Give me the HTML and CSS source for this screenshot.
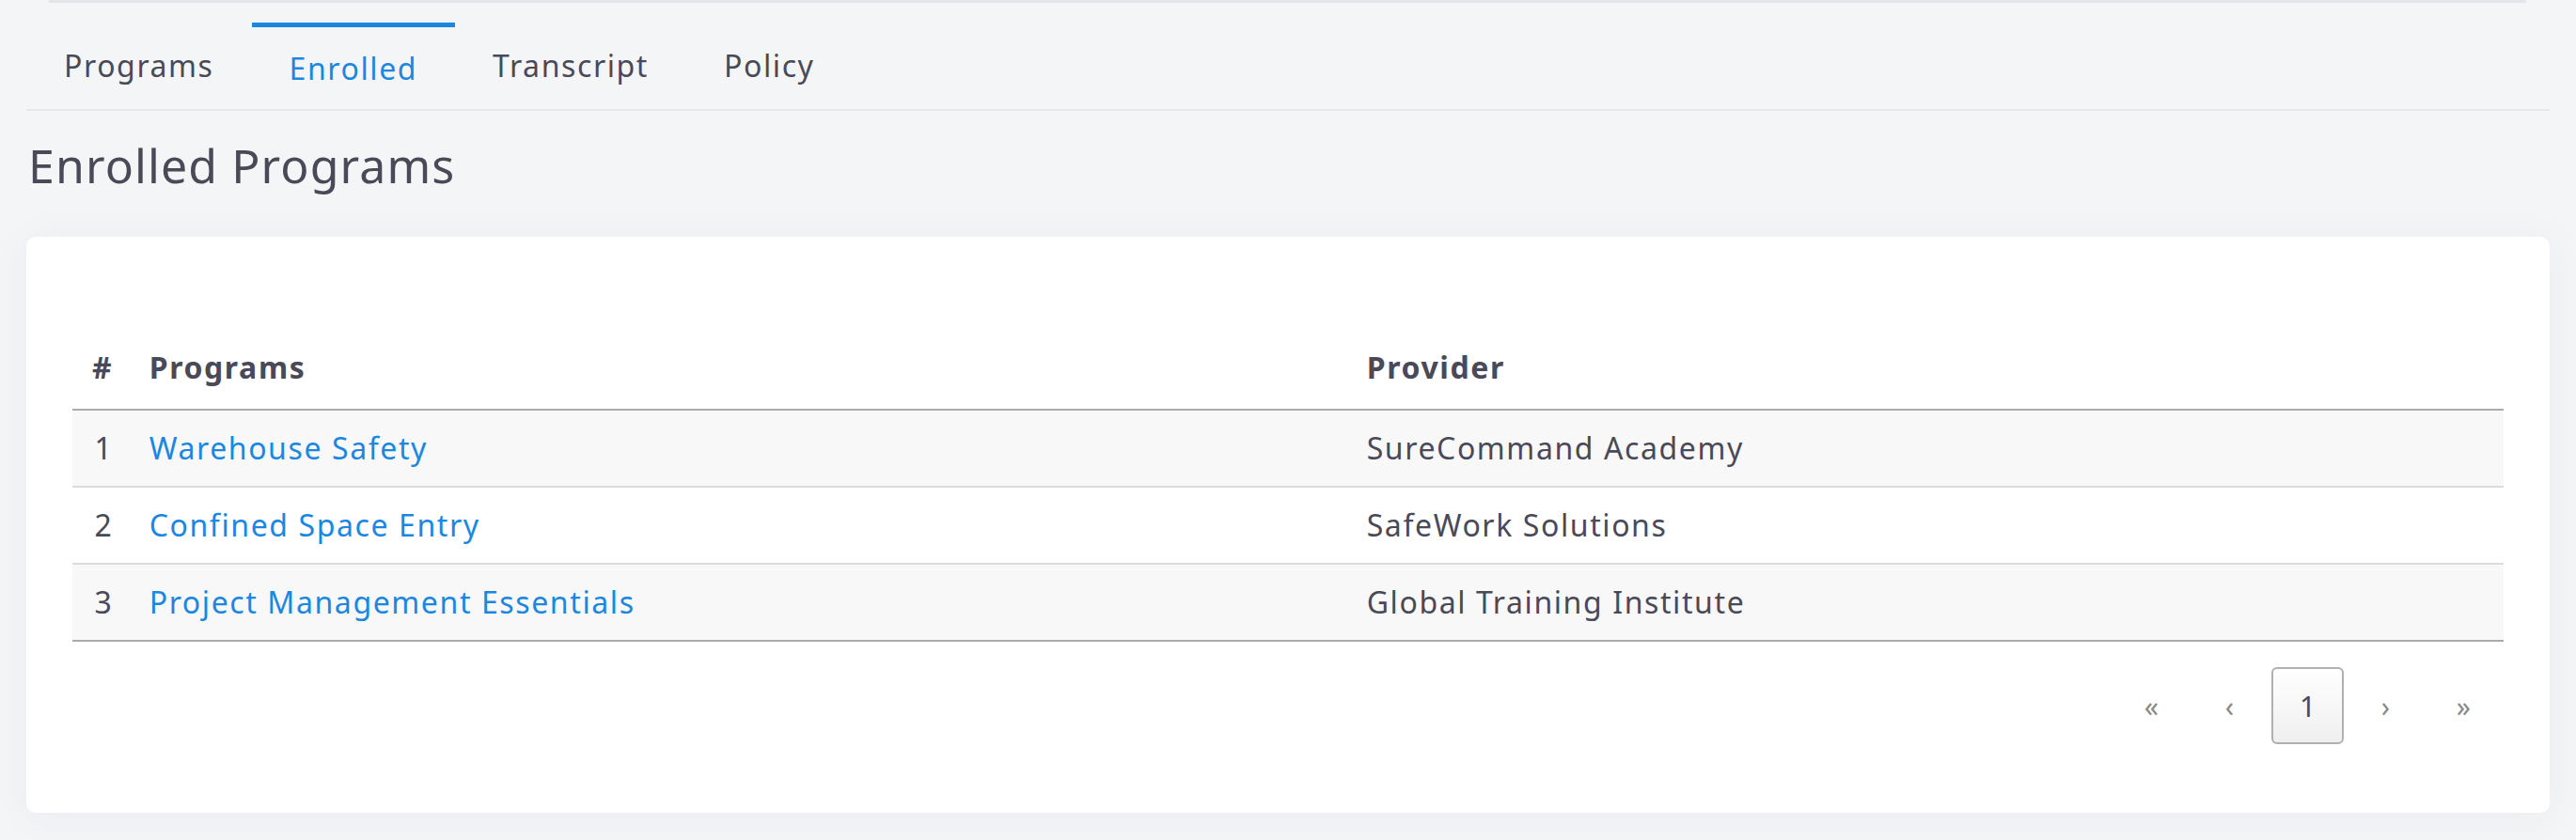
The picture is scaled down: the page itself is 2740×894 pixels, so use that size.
FILE: index.html
```html
<!DOCTYPE html>
<html lang="en">
<head>
    <meta charset="UTF-8">
    <title>Enrolled Programs</title>
    <link rel="stylesheet" href="styles.css">
</head>
<body>
<div class="page">
    <div class="topbar"></div>
    <ul class="tabs">
        <li class="tab">Programs</li>
        <li class="tab active">Enrolled</li>
        <li class="tab">Transcript</li>
        <li class="tab">Policy</li>
    </ul>
    <h1 class="page-title">Enrolled Programs</h1>
    <div class="card">
        <div class="toolbar"></div>
        <table class="programs">
            <thead>
            <tr>
                <th class="num">#</th>
                <th class="name">Programs</th>
                <th>Provider</th>
            </tr>
            </thead>
            <tbody>
            <tr>
                <td class="num">1</td>
                <td class="name"><a href="#">Warehouse Safety</a></td>
                <td>SureCommand Academy</td>
            </tr>
            <tr>
                <td class="num">2</td>
                <td class="name"><a href="#">Confined Space Entry</a></td>
                <td>SafeWork Solutions</td>
            </tr>
            <tr>
                <td class="num">3</td>
                <td class="name"><a href="#">Project Management Essentials</a></td>
                <td>Global Training Institute</td>
            </tr>
            </tbody>
        </table>
        <ul class="pager">
            <li>&laquo;</li>
            <li>&lsaquo;</li>
            <li class="current">1</li>
            <li>&rsaquo;</li>
            <li>&raquo;</li>
        </ul>
    </div>
</div>
</body>
</html>
```

FILE: styles.css
```css
html,
body {
    margin: 0;
    padding: 0;
}

body {
    font-family: "Noto Sans", "Open Sans", sans-serif;
    color: #4a4958;
    background-color: #f4f5f7;
}

.page {
    padding: 0 28px 31px;
}

.topbar {
    margin: 0 25px 0 24px;
    border-bottom: 3px solid #e4e5e8;
}

.tabs {
    display: flex;
    margin: 21px 0 0;
    padding: 0;
    list-style: none;
    border-bottom: 2px solid #e6e7ea;
}

.tabs .tab {
    font-size: 32px;
    line-height: 40px;
    padding: 21px 40px 26px;
    letter-spacing: 1.6px;
    border-top: 5px solid transparent;
}

.tabs .tab.active {
    padding-top: 24px;
    padding-bottom: 23px;
    color: #1b87e0;
    border-top-color: #1b87e0;
}

.page-title {
    font-size: 50px;
    font-weight: 400;
    line-height: 58px;
    margin: 29px 0 47px 2px;
    letter-spacing: 1.1px;
}

.card {
    padding: 49px 49px 73px;
    border-radius: 10px;
    background-color: #fff;
    box-shadow: 0 4px 40px rgba(40, 50, 80, 0.05);
}

.card .toolbar {
    height: 52px;
}

.programs {
    width: 100%;
    border-collapse: collapse;
    font-size: 32px;
    letter-spacing: 1.6px;
}

.programs th,
.programs td {
    line-height: 38px;
    padding: 21px 21px;
    text-align: left;
}

.programs th {
    font-weight: 700;
    line-height: 40px;
    padding-top: 18px;
    padding-bottom: 24px;
    border-bottom: 2px solid #ababab;
}

.programs td {
    border-bottom: 2px solid #dcdcdc;
}

.programs tbody tr:last-child td {
    border-bottom-color: #ababab;
}

.programs tbody tr:nth-child(odd) {
    background-color: #f8f8f8;
}

.programs .num {
    width: 19px;
    padding-right: 19px;
    text-align: right;
    letter-spacing: 0;
}

.programs .name {
    width: 1253px;
}

.programs a {
    text-decoration: none;
    color: #1b87e0;
}

.pager {
    display: flex;
    justify-content: flex-end;
    gap: 6px;
    margin: 27px 4px 0 0;
    padding: 0;
    list-style: none;
}

.pager li {
    font-size: 30px;
    display: flex;
    align-items: center;
    justify-content: center;
    box-sizing: border-box;
    width: 77px;
    height: 82px;
    color: #8a8a8a;
}

.pager .current {
    color: #4a4958;
    border: 2px solid #b0b0b0;
    border-radius: 6px;
    background: linear-gradient(#fff, #efefef);
}
```
